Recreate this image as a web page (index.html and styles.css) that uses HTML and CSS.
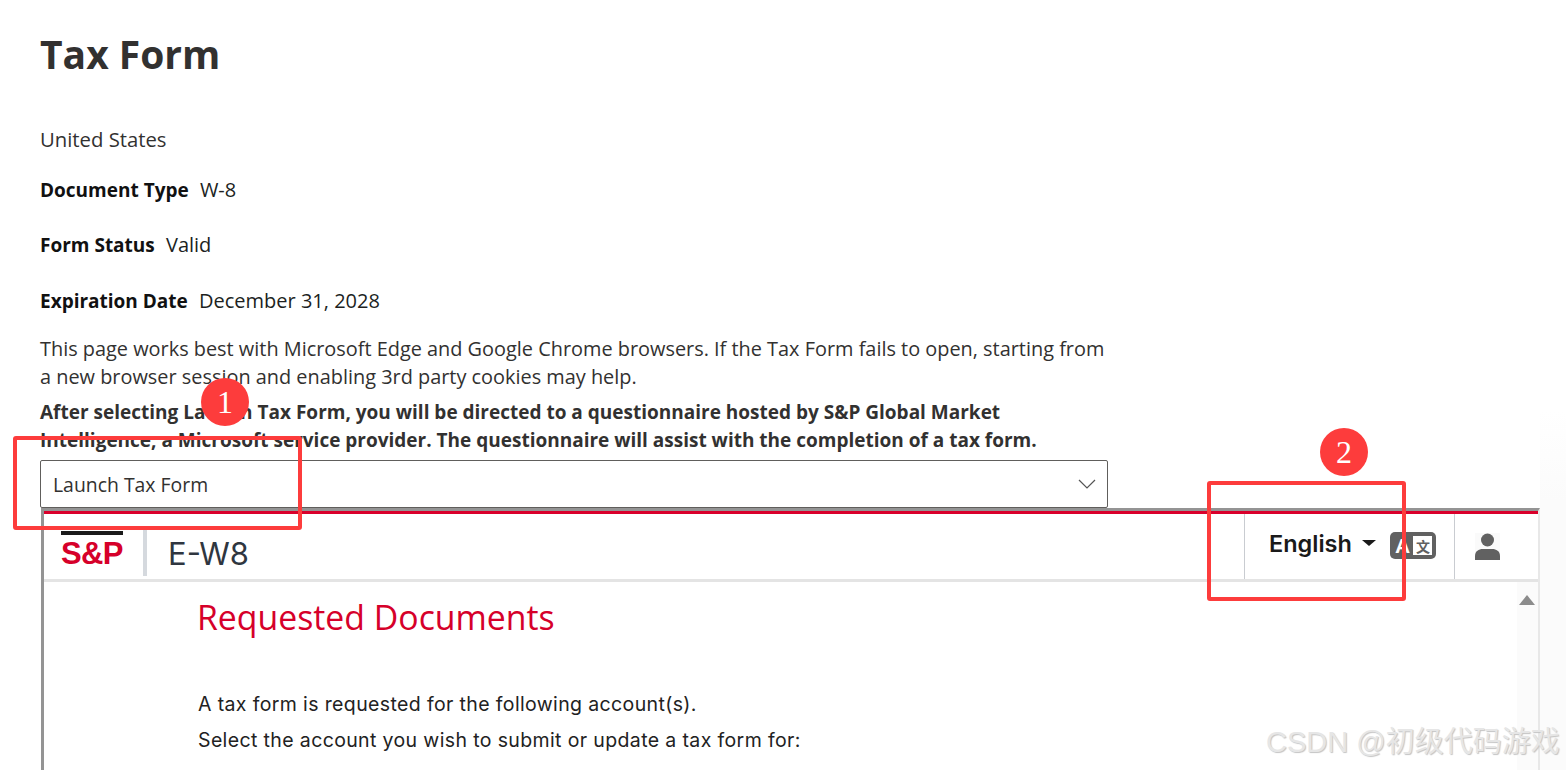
FILE: index.html
```html
<!DOCTYPE html>
<html lang="en">
<head>
    <meta charset="UTF-8">
    <title>Tax Form</title>
    <link rel="stylesheet" href="styles.css">
</head>
<body>

<div class="side-shade"></div>

<div class="page">
    <h1>Tax Form</h1>
    <p class="country">United States</p>
    <p class="field field-type"><strong>Document Type</strong> W-8</p>
    <p class="field field-status"><strong>Form Status</strong> Valid</p>
    <p class="field field-date"><strong>Expiration Date</strong> December 31, 2028</p>
    <p class="note">This page works best with Microsoft Edge and Google Chrome browsers. If the Tax Form fails to open, starting from a new browser session and enabling 3rd party cookies may help.</p>
    <p class="note note-bold">After selecting Launch Tax Form, you will be directed to a questionnaire hosted by S&amp;P Global Market Intelligence, a Microsoft service provider. The questionnaire will assist with the completion of a tax form.</p>

    <div class="launch">
        <span>Launch Tax Form</span>
        <svg class="launch-arrow" width="18" height="10" viewBox="0 0 18 10"><path d="M1 1l8 8 8-8" fill="none" stroke="#555" stroke-width="1.2"/></svg>
    </div>

    <!-- Embedded questionnaire -->
    <div class="frame">
        <div class="frame-head">
            <div class="logo">
                <div class="logo-bar"></div>
                <div class="logo-text">S&amp;P</div>
            </div>
            <div class="app-name">E-W8</div>
            <div class="lang">
                <span class="lang-name">English</span>
                <span class="caret"></span>
                <svg class="lang-icon" width="46" height="27" viewBox="0 0 46 27">
                    <rect width="46" height="27" rx="5" fill="#616161"/>
                    <rect x="23" y="4" width="19" height="19" fill="#fff"/>
                    <text x="5" y="21" class="lang-a">A</text>
                    <text x="26" y="20" class="lang-zh">文</text>
                </svg>
            </div>
            <div class="user">
                <svg class="user-icon" width="25" height="27" viewBox="0 0 25 27">
                    <circle cx="12.5" cy="7" r="6.5" fill="#616161"/>
                    <path d="M0 27v-4c0-5 4-7 7.5-7h10c3.500 0 7.500 2 7.500 7v4z" fill="#616161"/>
                </svg>
            </div>
        </div>
        <div class="frame-body">
            <div class="scroll-track"><div class="scroll-up"></div></div>
            <h2>Requested Documents</h2>
            <p>A tax form is requested for the following account(s).</p>
            <p>Select the account you wish to submit or update a tax form for:</p>
        </div>
    </div>
</div>

<!-- Annotations on top of the screenshot -->
<div class="mark mark-box-1"></div>
<div class="mark mark-box-2"></div>
<div class="badge badge-1">1</div>
<div class="badge badge-2">2</div>
<div class="watermark">CSDN @初级代码游戏</div>

</body>
</html>
```

FILE: styles.css
```css
body {
    margin: 0;
    height: 770px;
    overflow: hidden;
    background-color: #fff;
    font-family: 'Open Sans', 'Noto Sans', sans-serif;
    color: #323130;
    position: relative;
}
.side-shade {
    position: absolute;
    right: 0;
    top: 410px;
    width: 26px;
    height: 360px;
    background: linear-gradient(to bottom, #fff, #fbfbfb 25%);
}
.page {
    position: relative;
    padding: 29px 0 0 40px;
}
h1 {
    margin: 0;
    font-size: 39px;
    line-height: 50px;
    font-weight: 700;
}
p {
    margin: 0;
}
.country {
    margin-top: 46px;
    font-size: 20.3px;
    line-height: 28px;
    font-weight: 500;
    color: #323130;
}
.field {
    font-size: 20px;
    line-height: 28px;
    color: #201f1e;
}
.field strong {
    font-size: 19px;
    margin-right: 6px;
    color: #111;
}
.field-type {
    margin-top: 23px;
}
.field-status {
    margin-top: 27px;
}
.field-date {
    margin-top: 28px;
}
.note {
    width: 1075px;
    font-size: 19.9px;
    line-height: 28px;
}
.field-date + .note {
    margin-top: 20px;
}
.note-bold {
    margin-top: 7px;
    font-size: 19px;
    font-weight: 700;
}
.launch {
    box-sizing: border-box;
    width: 1068px;
    height: 48px;
    margin-top: 6px;
    padding: 0 11px 0 12px;
    border: 1px solid #605e5c;
    border-radius: 2px;
    display: flex;
    align-items: center;
    justify-content: space-between;
    font-size: 19.4px;
}
.frame {
    box-sizing: border-box;
    width: 1499px;
    height: 300px;
    margin-left: 1px;
    border-top: 3px solid #949494;
    border-left: 3px solid #949494;
    border-right: 2px solid #e8e8e8;
}
.frame-head {
    height: 65px;
    border-top: 3px solid #d9002b;
    border-bottom: 3px solid #e4e4e4;
    display: flex;
    align-items: stretch;
}
.logo {
    width: 62px;
    margin-left: 17px;
    padding-top: 17px;
}
.logo-bar {
    height: 4px;
    background-color: #1a1a1a;
}
.logo-text {
    font-family: 'Liberation Sans', sans-serif;
    font-weight: 700;
    font-size: 31px;
    line-height: 32px;
    margin-top: 3px;
    color: #d6002a;
    letter-spacing: -0.6px;
    white-space: nowrap;
}
.app-name {
    margin: 16px 0 0 20px;
    padding-left: 21px;
    height: 46px;
    border-left: 4px solid #d5d9de;
    font-family: 'Inter', sans-serif;
    font-size: 31px;
    line-height: 48px;
    color: #2f3640;
}
.lang {
    margin-left: auto;
    width: 211px;
    box-sizing: border-box;
    border-left: 1px solid #c9ccd1;
    border-right: 1px solid #c9ccd1;
    display: flex;
    align-items: center;
    padding-left: 24px;
    padding-bottom: 2px;
}
.lang-name {
    margin-bottom: 4px;
    font-family: 'Inter', sans-serif;
    font-weight: 600;
    font-size: 23.5px;
    color: #1a1a1a;
}
.caret {
    margin: 0 14px 6px 10px;
    border-left: 7px solid transparent;
    border-right: 7px solid transparent;
    border-top: 6px solid #1a1a1a;
}
.lang-icon {
    flex: none;
}
.lang-a {
    font-family: 'Liberation Sans', sans-serif;
    font-size: 21px;
    font-weight: 700;
    fill: #fff;
}
.lang-zh {
    font-family: 'Noto Sans CJK SC', sans-serif;
    font-size: 14px;
    font-weight: 700;
    fill: #616161;
}
.user {
    width: 83px;
    display: flex;
    align-items: center;
    padding-left: 20px;
    padding-bottom: 1px;
    box-sizing: border-box;
}
.user-icon {
    background-color: #fafafa;
}
.frame-body {
    position: relative;
    padding: 14px 0 0 154px;
    font-family: 'Inter', sans-serif;
    font-size: 19.5px;
    line-height: 36px;
    letter-spacing: 0.37px;
}
h2 {
    margin: 0 0 48px -1px;
    font-family: 'Open Sans', sans-serif;
    font-size: 33.8px;
    line-height: 42px;
    font-weight: 400;
    letter-spacing: 0;
    color: #d6002a;
}
.frame-body p {
    color: #222;
}
.scroll-track {
    position: absolute;
    top: 0;
    right: 0;
    width: 21px;
    height: 200px;
    background-color: #fbfbfb;
}
.scroll-up {
    margin: 13px 0 0 2px;
    width: 0;
    border-left: 8px solid transparent;
    border-right: 8px solid transparent;
    border-bottom: 10px solid #8c8c8c;
}
.mark {
    position: absolute;
    box-sizing: border-box;
    border: 4px solid #fd3c3c;
    border-radius: 3px;
}
.mark-box-1 {
    left: 13px;
    top: 436px;
    width: 289px;
    height: 94px;
}
.mark-box-2 {
    left: 1207px;
    top: 481px;
    width: 199px;
    height: 120px;
}
.badge {
    position: absolute;
    width: 48px;
    height: 48px;
    border-radius: 50%;
    background-color: #fd3c3c;
    color: #fff;
    font-family: 'Liberation Serif', serif;
    font-size: 32px;
    line-height: 48px;
    text-align: center;
}
.badge-1 {
    left: 201px;
    top: 378px;
}
.badge-2 {
    left: 1320px;
    top: 428px;
}
.watermark {
    position: absolute;
    left: 1266px;
    top: 722px;
    font-family: 'Liberation Sans', 'Noto Sans CJK SC', sans-serif;
    font-size: 29px;
    line-height: 40px;
    color: #e6e6e6;
    text-shadow: 1px 1px 1px #c4c4c4;
    white-space: nowrap;
}
```
